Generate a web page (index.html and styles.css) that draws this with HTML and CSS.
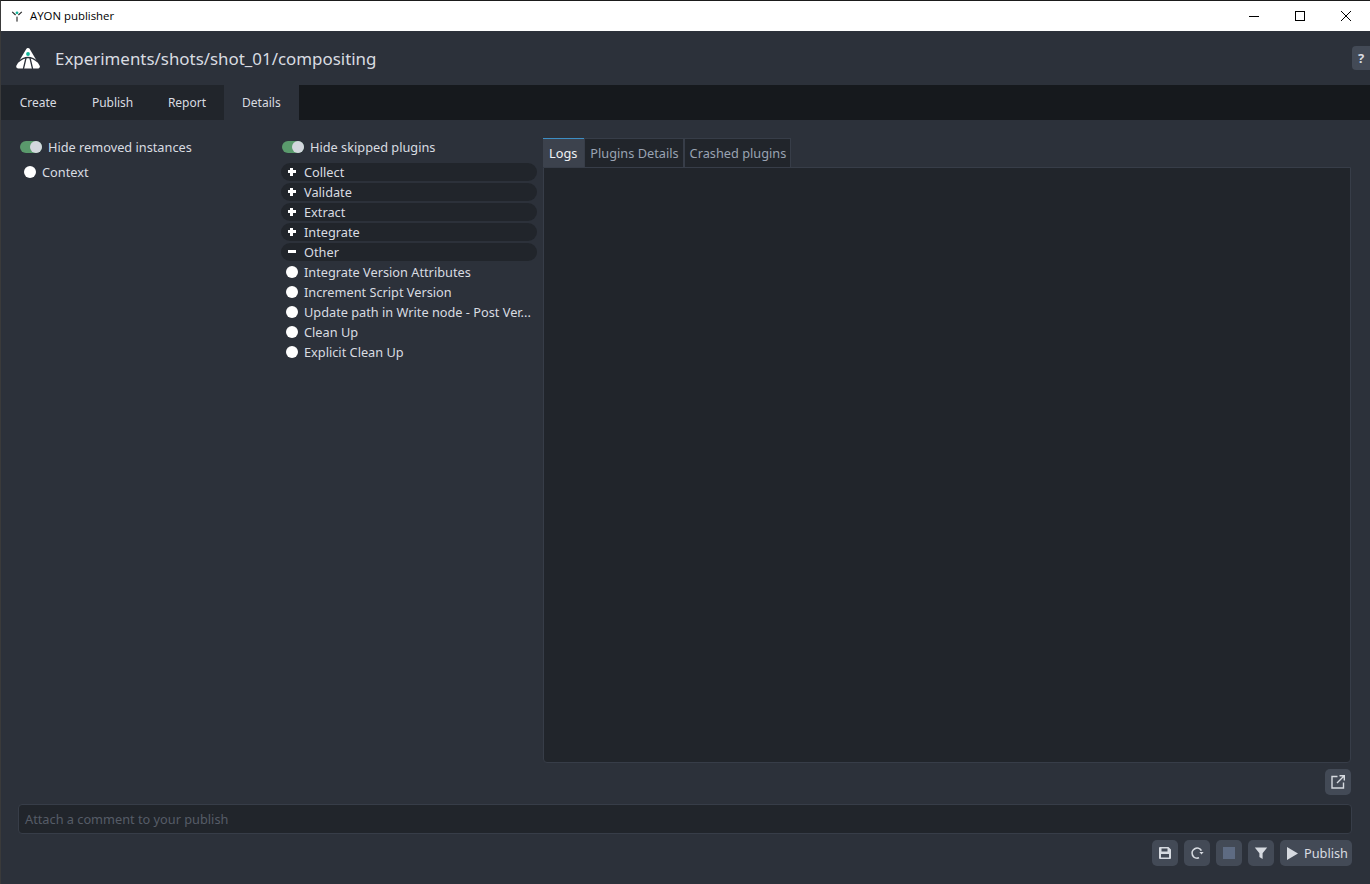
FILE: index.html
```html
<!DOCTYPE html>
<html>
    <head>
        <title>AYON publisher</title>
        <link rel="stylesheet" href="styles.css">
    </head>
    <body>
        <div class="window">
            <div class="titlebar">
                <svg class="title-icon" width="14" height="14" viewBox="0 0 14 14">
                    <circle cx="7" cy="3.8" r="1.4" fill="#12b59a"/>
                    <path d="M1.8 3.2 L5.2 6.4 L6 5.6 L2.6 2.4 Z M12.2 3.2 L8.8 6.4 L8 5.6 L11.4 2.4 Z" fill="#2b2b2b"/>
                    <rect x="6.2" y="7.6" width="1.6" height="5" fill="#666"/>
                </svg>
                <span class="title-text">AYON publisher</span>
                <div class="window-buttons">
                    <svg width="46" height="30" viewBox="0 0 46 30"><path d="M18 15.5 H28" stroke="#000" fill="none"/></svg>
                    <svg width="46" height="30" viewBox="0 0 46 30"><rect x="18.5" y="10.5" width="9" height="9" stroke="#000" fill="none"/></svg>
                    <svg width="46" height="30" viewBox="0 0 46 30"><path d="M18 10 L28 20 M28 10 L18 20" stroke="#000" fill="none"/></svg>
                </div>
            </div>

            <header class="context-bar">
                <svg class="logo" width="24" height="22" viewBox="0 0 24 22">
                    <path d="M12 3 L21.8 19.5 H2.2 Z" fill="#fff" stroke="#fff" stroke-width="4" stroke-linejoin="round"/>
                    <path d="M2 15 Q7 10.5 12 10.5 Q17 10.5 22 15" fill="none" stroke="#2c313a" stroke-width="1.3"/>
                    <path d="M10 11 L7.4 22 M14 11 L16.6 22" fill="none" stroke="#2c313a" stroke-width="1.3"/>
                    <circle cx="12" cy="7" r="1.9" fill="#12b59a"/>
                </svg>
                <span class="context-path">Experiments/shots/shot_01/compositing</span>
                <button class="help-btn" type="button">?</button>
            </header>

            <nav class="tabs">
                <div class="tab">Create</div>
                <div class="tab">Publish</div>
                <div class="tab">Report</div>
                <div class="tab active">Details</div>
                <div class="tabs-rest"></div>
            </nav>

            <main class="details">
                <section class="instances">
                    <div class="toggle-row">
                        <span class="toggle"></span>
                        <span>Hide removed instances</span>
                    </div>
                    <div class="item instance-item"><span class="dot"></span><span>Context</span></div>
                </section>

                <section class="plugins">
                    <div class="toggle-row">
                        <span class="toggle"></span>
                        <span>Hide skipped plugins</span>
                    </div>
                    <ul class="plugin-list">
                        <li class="item group"><span class="sign plus"></span><span>Collect</span></li>
                        <li class="item group"><span class="sign plus"></span><span>Validate</span></li>
                        <li class="item group"><span class="sign plus"></span><span>Extract</span></li>
                        <li class="item group"><span class="sign plus"></span><span>Integrate</span></li>
                        <li class="item group group-open"><span class="sign"></span><span>Other</span></li>
                        <li class="item"><span class="dot"></span><span>Integrate Version Attributes</span></li>
                        <li class="item"><span class="dot"></span><span>Increment Script Version</span></li>
                        <li class="item"><span class="dot"></span><span>Update path in Write node - Post Ver...</span></li>
                        <li class="item"><span class="dot"></span><span>Clean Up</span></li>
                        <li class="item"><span class="dot"></span><span>Explicit Clean Up</span></li>
                    </ul>
                </section>

                <section class="log-view">
                    <div class="log-tabs">
                        <div class="log-tab active">Logs</div>
                        <div class="log-tab">Plugins Details</div>
                        <div class="log-tab">Crashed plugins</div>
                    </div>
                    <div class="log-body"></div>
                    <div class="log-footer">
                        <button class="icon-btn" type="button">
                            <svg width="16" height="16" viewBox="0 0 16 16" fill="none" stroke="#d6dae0" stroke-width="1.4">
                                <path d="M7.5 2.5 H2 V14 H13.5 V8.5"/>
                                <path d="M7 9 L14 2 M9.5 1.7 H14.3 V6.5"/>
                            </svg>
                        </button>
                    </div>
                </section>
            </main>

            <div class="comment-row">
                <div class="comment-input">Attach a comment to your publish</div>
            </div>

            <footer class="actions">
                <button class="icon-btn" type="button">
                    <svg width="14" height="14" viewBox="0 0 14 14"><path d="M1 2 Q1 1 2 1 H10.5 L13 3.5 V12 Q13 13 12 13 H2 Q1 13 1 12 Z M3.5 2.5 V5.5 H9.5 V2.5 Z M3 8 V11.5 H11 V8 Z" fill="#d6dae0" fill-rule="evenodd"/></svg>
                </button>
                <button class="icon-btn" type="button">
                    <svg width="14" height="14" viewBox="0 0 14 14" fill="none"><path d="M9 11.8 A5 5 0 1 1 11.4 4.6" stroke="#d6dae0" stroke-width="1.7"/><path d="M9.4 6 H13.6 L11.5 8.6 Z" fill="#d6dae0"/></svg>
                </button>
                <button class="icon-btn" type="button"><span class="stop-square"></span></button>
                <button class="icon-btn" type="button">
                    <svg width="14" height="14" viewBox="0 0 14 14"><path d="M0.8 1.5 H13.2 L8.6 7.2 V13 L5.4 11 V7.2 Z" fill="#d6dae0"/></svg>
                </button>
                <button class="publish-btn" type="button">
                    <svg width="11" height="13" viewBox="0 0 11 13"><path d="M0 0 L11 6.5 L0 13 Z" fill="#d6dae0"/></svg>
                    <span>Publish</span>
                </button>
            </footer>
        </div>
    </body>
</html>
```

FILE: styles.css
```css
:root {
    --bg-color: #2c313a;
    --bg-dark: #21252b;
    --bg-darker: #16191d;
    --bg-btn: #434a56;
    --border: #373d48;
    --ft-color: #d9dce1;
    --ft-dim: #99a3b2;
}

*, *::before, *::after {
    box-sizing: border-box;
}

html, body {
    height: 100%;
}

body {
    margin: 0px;
    background-color: var(--bg-color);
    color: var(--ft-color);
    font-family: "Noto Sans", sans-serif;
    font-size: 12.75px;
    overflow: hidden;
}

.window {
    display: flex;
    flex-direction: column;
    height: 884px;
    border-top: 1px solid #1b1b1b;
    border-left: 1px solid #3a3a3a;
}

/* title bar */
.titlebar {
    display: flex;
    align-items: center;
    flex: none;
    height: 30px;
    padding-left: 9px;
    background-color: #fff;
    color: #000;
    font-family: "Open Sans", sans-serif;
    font-size: 11.4px;
}

.title-icon {
    margin-right: 6px;
}

.title-text {
    padding-bottom: 2px;
}

.window-buttons {
    display: flex;
    margin-left: auto;
    margin-right: 1px;
}

/* context */
.context-bar {
    display: flex;
    align-items: center;
    flex: none;
    height: 54px;
    padding-left: 15px;
}

.context-path {
    margin-left: 15px;
    padding-top: 1px;
    font-size: 16.9px;
}

.help-btn {
    width: 18px;
    height: 24px;
    margin-left: auto;
    padding: 0px;
    border: 0px;
    border-radius: 4px 0px 0px 4px;
    background-color: var(--bg-btn);
    color: var(--ft-color);
    font-family: "Noto Sans", sans-serif;
    font-size: 13px;
    font-weight: 700;
}

/* main tabs */
.tabs {
    display: flex;
    flex: none;
    height: 35px;
    background-color: var(--bg-dark);
}

.tab {
    display: flex;
    align-items: center;
    justify-content: center;
    width: 74.4px;
    font-size: 12px;
}

.tab.active {
    background-color: var(--bg-color);
}

.tabs-rest {
    flex: 1;
    background-color: var(--bg-darker);
}

/* details */
.details {
    display: flex;
    flex: none;
    height: 684px;
    padding: 17px 19px 0px 17px;
}

.instances {
    flex: none;
    width: 263px;
}

.plugins {
    flex: none;
    width: 256px;
}

.toggle-row {
    display: flex;
    align-items: center;
    height: 20px;
    margin-bottom: 5px;
    padding-left: 2px;
}

.plugins .toggle-row {
    margin-bottom: 6px;
    padding-left: 1px;
}

.toggle {
    position: relative;
    flex: none;
    width: 22px;
    height: 12px;
    margin-right: 6px;
    border-radius: 6px;
    background-color: #5a9a6c;
}

.toggle::after {
    content: "";
    position: absolute;
    top: 0px;
    right: 0px;
    width: 12px;
    height: 12px;
    border-radius: 50%;
    background-color: #d3d7dd;
}

.plugin-list {
    list-style: none;
    margin: 0px;
    padding: 0px;
}

.item {
    display: flex;
    align-items: center;
    height: 20px;
    padding-left: 5px;
    white-space: nowrap;
}

.instance-item {
    padding-left: 6px;
}

.group {
    height: 18px;
    margin-bottom: 2px;
    border-radius: 9px;
    background-color: var(--bg-dark);
}

.group-open {
    margin-bottom: 1px;
}

.dot {
    flex: none;
    width: 12px;
    height: 12px;
    margin-right: 6px;
    border-radius: 50%;
    background-color: #fff;
}

.sign {
    position: relative;
    flex: none;
    width: 12px;
    height: 12px;
    margin-right: 6px;
}

.sign::before {
    content: "";
    position: absolute;
    top: 4px;
    left: 2px;
    width: 8px;
    height: 3px;
    background-color: #fff;
}

.sign.plus::after {
    content: "";
    position: absolute;
    top: 2px;
    left: 4px;
    width: 3px;
    height: 8px;
    background-color: #fff;
}

/* logs */
.log-view {
    display: flex;
    flex: 1;
    flex-direction: column;
    min-width: 0px;
    margin-left: 6px;
    padding-top: 1px;
}

.log-tabs {
    display: flex;
    flex: none;
    height: 29px;
}

.log-tab {
    display: flex;
    align-items: center;
    padding: 0px 4px 0px 5px;
    border: 1px solid var(--border);
    border-bottom: 0px;
    background-color: var(--bg-dark);
    color: var(--ft-dim);
}

.log-tab.active {
    border-top: 1px solid #3d8ec4;
    border-left: 0px;
    border-right: 0px;
    padding: 0px 7px 0px 6px;
    background-color: #3c424d;
    color: #f0f2f5;
}

.log-body {
    flex: none;
    height: 596px;
    border: 1px solid var(--border);
    border-radius: 0px 0px 4px 4px;
    background-color: var(--bg-dark);
}

.log-footer {
    display: flex;
    justify-content: flex-end;
    margin-top: 6px;
}

/* buttons */
.icon-btn, .publish-btn {
    display: flex;
    align-items: center;
    justify-content: center;
    height: 26px;
    padding: 0px;
    border: 0px;
    border-radius: 5px;
    background-color: var(--bg-btn);
    color: var(--ft-color);
    font-family: "Noto Sans", sans-serif;
    font-size: 12.75px;
}

.icon-btn {
    width: 26px;
}

.stop-square {
    width: 12px;
    height: 12px;
    background-color: #5e6b82;
}

.publish-btn {
    justify-content: flex-start;
    width: 72px;
    padding-left: 7px;
    gap: 6px;
}

/* comment */
.comment-row {
    flex: none;
    padding: 0px 18px 0px 17px;
}

.comment-input {
    display: flex;
    align-items: center;
    height: 30px;
    padding-left: 6px;
    border: 1px solid var(--border);
    border-radius: 4px;
    background-color: var(--bg-dark);
    color: #565c67;
}

.actions {
    display: flex;
    justify-content: flex-end;
    gap: 6px;
    margin-top: 6px;
    padding-right: 18px;
}
```
